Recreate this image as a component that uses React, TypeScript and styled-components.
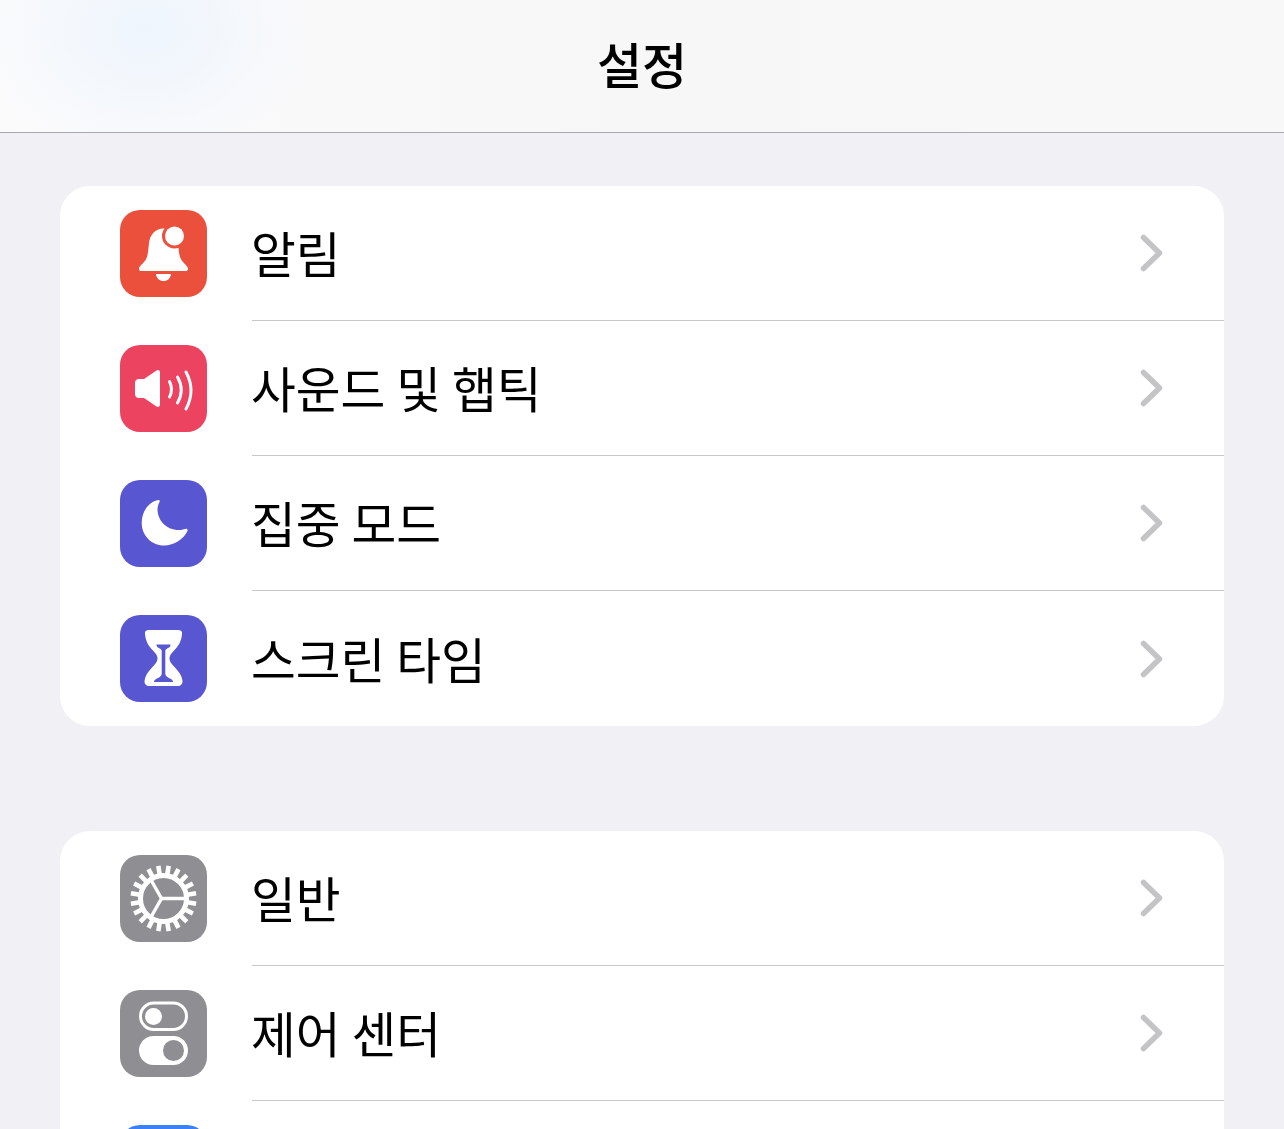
import React from "react";
import styled, { createGlobalStyle } from "styled-components";

const GlobalStyle = createGlobalStyle`
    html, body {
        margin: 0;
        padding: 0;
        height: 100%;
        overflow: hidden;
        background: #f1f0f5;
    }
`;

const Page = styled.div`
    height: 1129px;
    overflow: hidden;
    background: #f1f0f5;
    font-family: "Noto Sans CJK KR", "Liberation Sans", sans-serif;
`;
const NavBar = styled.header`
    height: 133px;
    box-sizing: border-box;
    padding-bottom: 7px;
    display: flex;
    align-items: center;
    justify-content: center;
    border-bottom: 1px solid #a9a8b0;
    background:
        radial-gradient(ellipse 170px 130px at 145px 30px, #eef5fd 0%, rgba(238, 245, 253, 0) 100%),
        linear-gradient(90deg, #fbfbfc 0%, #f7f7f8 50%, #f8f8f9 100%);
`;
const NavTitle = styled.h1`
    margin: 0;
    font-size: 49px;
    font-weight: 500;
    line-height: 1;
    color: #000;
`;
const Content = styled.main`
    display: flex;
    flex-direction: column;
    gap: 105px;
    padding: 53px 60px 0;
`;
const Card = styled.section`
    background: #fff;
    border-radius: 30px;
    overflow: hidden;
`;
const Row = styled.div`
    display: flex;
    align-items: center;
    gap: 45px;
    padding-left: 60px;
`;
const IconTile = styled.div<{ $color: string }>`
    flex: none;
    width: 87px;
    height: 87px;
    border-radius: 20px;
    background: ${(p) => p.$color};
    & > svg {
        display: block;
    }
`;
const RowBody = styled.div`
    flex: 1;
    height: 135px;
    box-sizing: border-box;
    display: flex;
    align-items: center;
    justify-content: space-between;
    padding-right: 60px;
    border-bottom: 1px solid #c8c8ca;
    ${Row}:last-child & {
        border-bottom: none;
    }
`;
const Label = styled.span`
    font-size: 48.7px;
    line-height: 1;
    margin: 0 0 1px -1px;
    color: #000;
    font-weight: 400;
`;
const Chevron = styled.svg`
    flex: none;
    width: 24px;
    height: 38px;
`;

const RED = "#eb503c";
const PINK = "#ec4360";
const INDIGO = "#5856d0";
const GRAY = "#8e8e93";
const BLUE = "#3a80f6";

function Glyph({ children }: { children: React.ReactNode }) {
    return (
        <svg width="87" height="87" viewBox="0 0 87 87" fill="#fff">
            {children}
        </svg>
    );
}

function BellIcon() {
    return (
        <Glyph>
            <path d="M43.5 18.5C35 18.5 30 25 29 33C28 42 28 48 24 52C21.5 55 19 56.5 19 59C19 60.5 20 61 21.5 61H65.5C67 61 68 60.5 68 59C68 56.5 65.5 55 63 52C59 48 59 42 58 33C57 25 52 18.5 43.5 18.5Z" />
            <path d="M36 64H51C50.5 68.5 47.5 71 43.5 71C39.5 71 36.5 68.5 36 64Z" />
            <circle cx="54.5" cy="26" r="12.5" fill={RED} />
            <circle cx="54.5" cy="26" r="9.5" />
        </Glyph>
    );
}

function SpeakerIcon() {
    return (
        <Glyph>
            <path d="M19 34H24L36.5 25.5C38.5 24.5 40 25.5 40 27.5V59.5C40 61.5 38.5 62.5 36.5 61.5L24 53H19C16.5 53 15 51.5 15 49V38C15 35.5 16.5 34 19 34Z" />
            <g fill="none" stroke="#fff" strokeWidth="3" strokeLinecap="round">
                <path d="M49.5 36.5Q53.5 44.5 49.5 52" />
                <path d="M57.5 32Q65 45 57.5 58" />
                <path d="M66 27Q76 45.5 66 64" />
            </g>
        </Glyph>
    );
}

function MoonIcon() {
    return (
        <Glyph>
            <path d="M38.5 20C28 22 21.7 32 21.7 43C21.7 55.5 31.5 65.5 44 65.5C54.5 65.5 63.5 59 67.5 51C68 49.5 67 48.5 65.5 49C63.5 49.5 61 50 58.5 50C47 50 37.5 41 37.5 29C37.5 26.5 38.5 24 39.5 22C40 20.5 39.5 19.8 38.5 20Z" />
        </Glyph>
    );
}

function HourglassIcon() {
    return (
        <Glyph>
            <path d="M29 15H58C61 15 62.5 16.5 62 19C61.5 26 58.5 31 54.5 35C51 38.5 49.5 40.5 49.5 43.5C49.5 46.5 51 48.5 54.5 52C59 56.5 62 61 62.5 66C62.5 69.5 60.5 71 58 71H29C26.5 71 24.5 69.5 24.5 66C25 61 28 56.5 32.5 52C36 48.5 37.5 46.5 37.5 43.5C37.5 40.5 36 38.5 32.5 35C28.5 31 25.5 26 25 19C24.5 16.5 26 15 29 15Z" />
            <path
                d="M36.5 29.5H50.5C50.5 31 50 32 49 32.5C47 33.5 45.5 34 45.3 36V59C45.5 61 48 62.5 50 63.5C52 64.5 53 65.5 53 67H34C34 65.5 35 64.5 37 63.5C39 62.5 41.5 61 41.7 59V36C41.5 34 40 33.5 38 32.5C37 32 36.5 31 36.5 29.5Z"
                fill={INDIGO}
            />
        </Glyph>
    );
}

function GearIcon() {
    const teeth = [];
    for (let i = 0; i < 20; i++) {
        const a = ((i + 0.5) / 20) * Math.PI * 2;
        teeth.push(
            <line
                key={i}
                x1={43.5 + Math.cos(a) * 24}
                y1={43.5 + Math.sin(a) * 24}
                x2={43.5 + Math.cos(a) * 33}
                y2={43.5 + Math.sin(a) * 33}
            />
        );
    }
    return (
        <Glyph>
            <g fill="none" stroke="#fff">
                <g strokeWidth="4.6">{teeth}</g>
                <circle cx="43.5" cy="43.5" r="23" strokeWidth="5" />
                <path d="M41.5 43.5H66M41.5 43.5L31 25M41.5 43.5L31 62" strokeWidth="3.4" />
            </g>
        </Glyph>
    );
}

function SwitchesIcon() {
    return (
        <Glyph>
            <rect x="20.5" y="13" width="46" height="26.5" rx="13.25" fill="none" stroke="#fff" strokeWidth="3" />
            <circle cx="33.5" cy="26.5" r="8.5" />
            <rect x="19" y="46" width="49" height="29" rx="14.5" />
            <circle cx="53.5" cy="60.5" r="10.5" fill={GRAY} />
        </Glyph>
    );
}

interface SettingsRow {
    label: string;
    color: string;
    icon: React.ReactNode;
}

const firstGroup: SettingsRow[] = [
    { label: "알림", color: RED, icon: <BellIcon /> },
    { label: "사운드 및 햅틱", color: PINK, icon: <SpeakerIcon /> },
    { label: "집중 모드", color: INDIGO, icon: <MoonIcon /> },
    { label: "스크린 타임", color: INDIGO, icon: <HourglassIcon /> },
];

// the third row runs off the bottom of the screen, only its icon top shows
const secondGroup: SettingsRow[] = [
    { label: "일반", color: GRAY, icon: <GearIcon /> },
    { label: "제어 센터", color: GRAY, icon: <SwitchesIcon /> },
    { label: "", color: BLUE, icon: null },
];

function SettingsCard({ rows }: { rows: SettingsRow[] }) {
    return (
        <Card>
            {rows.map((row, i) => (
                <Row key={i}>
                    <IconTile $color={row.color}>{row.icon}</IconTile>
                    <RowBody>
                        <Label>{row.label}</Label>
                        <Chevron viewBox="0 0 24 38" fill="none" stroke="#c4c4c6" strokeWidth="5.5" strokeLinecap="round" strokeLinejoin="round">
                            <path d="M3.5 3.5L19.5 19L3.5 34.5" />
                        </Chevron>
                    </RowBody>
                </Row>
            ))}
        </Card>
    );
}

export default function App() {
    return (
        <Page>
            <GlobalStyle />
            <NavBar>
                <NavTitle>설정</NavTitle>
            </NavBar>
            <Content>
                <SettingsCard rows={firstGroup} />
                <SettingsCard rows={secondGroup} />
            </Content>
        </Page>
    );
}
